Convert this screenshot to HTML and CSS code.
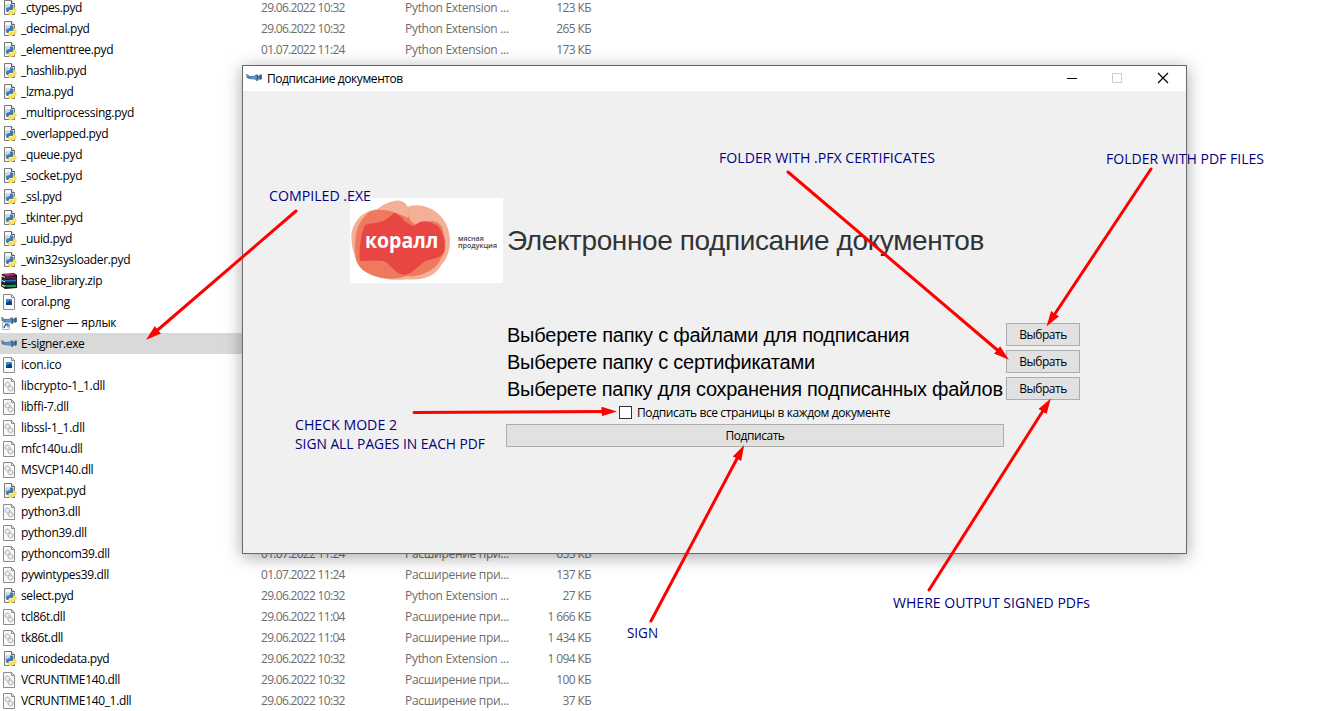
FILE: index.html
```html
<!DOCTYPE html>
<html lang="ru">
<head>
<meta charset="utf-8">
<title>Подписание документов</title>
<link rel="stylesheet" href="styles.css">
</head>
<body>
<svg class="defs" width="0" height="0">
  <symbol id="py" viewBox="0 0 16 16">
    <path d="M3.500 .5h7l3 3v11h-10z" fill="#f4f6f7" stroke="#75797d"/>
    <path d="M10.500 .5v3h3" fill="#fff" stroke="#55595d"/>
    <path d="M4 5q3-2 5 0v5H4z" fill="#ccd5da"/>
    <path d="M9 4.500q3.500-1 3.500 1.500v2.500q0 1.500-2 1.500H9q-1.500 0-1.500 2H6q-1.500-1-.8-3.500Q6 7 9 7z" fill="#3b7cb2"/>
    <path d="M12.500 7.500H14q2 1 1.800 3.500-.5 2-2.800 2h-1q0 2-2 2-3 0-3-2t2-2.200h2q1.500 0 1.500-1.500z" fill="#ffdf50"/>
  </symbol>
  <symbol id="dll" viewBox="0 0 16 16">
    <path d="M2.500 .5h8l3 3v12h-11z" fill="#fafafa" stroke="#8c8c8c"/>
    <path d="M10.500 .5v3h3" fill="none" stroke="#8c8c8c"/>
    <circle cx="6.500" cy="6.500" r="2.500" fill="#e1e6ea" stroke="#9ba4ab" stroke-dasharray="1.300 .5"/>
    <circle cx="9.500" cy="10.500" r="2.500" fill="#e1e6ea" stroke="#8f9ba4" stroke-dasharray="1.300 .5"/>
    <circle cx="6.500" cy="6.500" r=".8" fill="#fff"/><circle cx="9.500" cy="10.500" r=".8" fill="#fff"/>
  </symbol>
  <symbol id="img" viewBox="0 0 16 16">
    <path d="M2.500 .5h8l3 3v12h-11z" fill="#fafafa" stroke="#8c8c8c"/>
    <path d="M10.500 .5v3h3" fill="none" stroke="#8c8c8c"/>
    <path d="M5 5h6v6H5z" fill="#1565b8"/><path d="M5 5h6v2L8 9 5 7z" fill="#2e8be0"/><path d="M7 8l2-1.500L11 9v2H5V9.500z" fill="#0d3c7c"/>
  </symbol>
  <symbol id="zip" viewBox="0 0 16 16">
    <path d="M1 1l12-1 3 2v13l-12 1-4-3z" fill="#181818"/>
    <path d="M2 1.500l10-1 3 1.500-10 1z" fill="#c33483"/><path d="M5 3.500h10v2H5z" fill="#8b1450"/>
    <path d="M2 6l3 1 10-.6v2.800H5z" fill="#1f73bb"/><path d="M5 8h10v1.500H5z" fill="#0f4478"/>
    <path d="M2 11l3 1.300 10-.8V14H5z" fill="#20945a"/>
    <path d="M1 3l3 1.500M1 7.500l3 1.500M1 12l3 1.500" stroke="#e9e6df" stroke-width="1.200"/>
  </symbol>
  <symbol id="plane" viewBox="0 0 16 16">
    <path d="M0 4l2 .5L3.500 6 9 5.800 9.500 4.500h2l.7 1.300 1.300-.3V4.500H16v4.500l-2 .8-1.500-.5-1.500 1.700-2-1.500-5.500-.5L.8 8z" fill="#56789b"/>
    <path d="M3.500 7l7-.5v2.200L4.500 8.500z" fill="#4f9be5"/><path d="M11.500 5v6M14.500 5v4.500" stroke="#374f68" stroke-width=".8"/>
    <path d="M0 4.500l2.500 2" stroke="#90a4b6"/>
  </symbol>
  <symbol id="link" viewBox="0 0 16 16">
    <use href="#plane" y="-2" width="16" height="16"/>
    <path d="M1.500 7.500h7v7h-7z" fill="#fff" stroke="#b6b6b6"/>
    <path d="M3 13q0-2.500 3-3.500M4 9.200h3v3" fill="none" stroke="#1a65b5" stroke-width="1.300"/>
  </symbol>
</svg>

<main class="files">
  <div class="row"><svg class="ico"><use href="#py"/></svg><span class="name">_ctypes.pyd</span><span class="date">29.06.2022 10:32</span><span class="type">Python Extension ...</span><span class="size">123 КБ</span></div>
  <div class="row"><svg class="ico"><use href="#py"/></svg><span class="name">_decimal.pyd</span><span class="date">29.06.2022 10:32</span><span class="type">Python Extension ...</span><span class="size">265 КБ</span></div>
  <div class="row"><svg class="ico"><use href="#py"/></svg><span class="name">_elementtree.pyd</span><span class="date">01.07.2022 11:24</span><span class="type">Python Extension ...</span><span class="size">173 КБ</span></div>
  <div class="row"><svg class="ico"><use href="#py"/></svg><span class="name">_hashlib.pyd</span></div>
  <div class="row"><svg class="ico"><use href="#py"/></svg><span class="name">_lzma.pyd</span></div>
  <div class="row"><svg class="ico"><use href="#py"/></svg><span class="name wide">_multiprocessing.pyd</span></div>
  <div class="row"><svg class="ico"><use href="#py"/></svg><span class="name">_overlapped.pyd</span></div>
  <div class="row"><svg class="ico"><use href="#py"/></svg><span class="name">_queue.pyd</span></div>
  <div class="row"><svg class="ico"><use href="#py"/></svg><span class="name">_socket.pyd</span></div>
  <div class="row"><svg class="ico"><use href="#py"/></svg><span class="name">_ssl.pyd</span></div>
  <div class="row"><svg class="ico"><use href="#py"/></svg><span class="name">_tkinter.pyd</span></div>
  <div class="row"><svg class="ico"><use href="#py"/></svg><span class="name">_uuid.pyd</span></div>
  <div class="row"><svg class="ico"><use href="#py"/></svg><span class="name">_win32sysloader.pyd</span></div>
  <div class="row"><svg class="ico"><use href="#zip"/></svg><span class="name">base_library.zip</span></div>
  <div class="row"><svg class="ico"><use href="#img"/></svg><span class="name">coral.png</span></div>
  <div class="row"><svg class="ico"><use href="#link"/></svg><span class="name wide">E-signer — ярлык</span></div>
  <div class="row selected"><svg class="ico"><use href="#plane"/></svg><span class="name">E-signer.exe</span></div>
  <div class="row"><svg class="ico"><use href="#img"/></svg><span class="name wide">icon.ico</span></div>
  <div class="row"><svg class="ico"><use href="#dll"/></svg><span class="name wide">libcrypto-1_1.dll</span></div>
  <div class="row"><svg class="ico"><use href="#dll"/></svg><span class="name">libffi-7.dll</span></div>
  <div class="row"><svg class="ico"><use href="#dll"/></svg><span class="name wide">libssl-1_1.dll</span></div>
  <div class="row"><svg class="ico"><use href="#dll"/></svg><span class="name">mfc140u.dll</span></div>
  <div class="row"><svg class="ico"><use href="#dll"/></svg><span class="name">MSVCP140.dll</span></div>
  <div class="row"><svg class="ico"><use href="#py"/></svg><span class="name">pyexpat.pyd</span></div>
  <div class="row"><svg class="ico"><use href="#dll"/></svg><span class="name">python3.dll</span></div>
  <div class="row"><svg class="ico"><use href="#dll"/></svg><span class="name">python39.dll</span></div>
  <div class="row"><svg class="ico"><use href="#dll"/></svg><span class="name">pythoncom39.dll</span><span class="date">01.07.2022 11:24</span><span class="type">Расширение при...</span><span class="size">653 КБ</span></div>
  <div class="row"><svg class="ico"><use href="#dll"/></svg><span class="name">pywintypes39.dll</span><span class="date">01.07.2022 11:24</span><span class="type">Расширение при...</span><span class="size">137 КБ</span></div>
  <div class="row"><svg class="ico"><use href="#py"/></svg><span class="name">select.pyd</span><span class="date">29.06.2022 10:32</span><span class="type">Python Extension ...</span><span class="size">27 КБ</span></div>
  <div class="row"><svg class="ico"><use href="#dll"/></svg><span class="name">tcl86t.dll</span><span class="date">29.06.2022 11:04</span><span class="type">Расширение при...</span><span class="size">1 666 КБ</span></div>
  <div class="row"><svg class="ico"><use href="#dll"/></svg><span class="name">tk86t.dll</span><span class="date">29.06.2022 11:04</span><span class="type">Расширение при...</span><span class="size">1 434 КБ</span></div>
  <div class="row"><svg class="ico"><use href="#py"/></svg><span class="name">unicodedata.pyd</span><span class="date">29.06.2022 10:32</span><span class="type">Python Extension ...</span><span class="size">1 094 КБ</span></div>
  <div class="row"><svg class="ico"><use href="#dll"/></svg><span class="name">VCRUNTIME140.dll</span><span class="date">29.06.2022 10:32</span><span class="type">Расширение при...</span><span class="size">100 КБ</span></div>
  <div class="row"><svg class="ico"><use href="#dll"/></svg><span class="name">VCRUNTIME140_1.dll</span><span class="date">29.06.2022 10:32</span><span class="type">Расширение при...</span><span class="size">37 КБ</span></div>
</main>

<section class="window">
  <header class="titlebar">
    <svg class="ico"><use href="#plane"/></svg>
    <span class="title">Подписание документов</span>
    <svg class="controls" width="104" height="12" viewBox="0 0 104 12">
      <path d="M0 6.500h10" stroke="#000"/>
      <path d="M45.500 1.500h9v9h-9z" fill="none" stroke="#ccc"/>
      <path d="M91 1l10 10M101 1L91 11" stroke="#000" stroke-width="1.200"/>
    </svg>
  </header>
  <div class="brand">
    <svg class="logo" width="153" height="85" viewBox="0 0 459 255">
      <path d="M0 0h459v255H0z" fill="#fff"/>
      <g transform="translate(-30 -24)">
        <path d="M34 140C36 95 70 62 110 58 135 42 155 30 180 32 195 35 200 45 202 50 260 32 328 75 330 150 330 190 315 215 304 224 290 256 250 272 200 268 150 274 65 265 45 200 38 180 34 160 34 140z" fill="#f3b096"/>
        <path d="M46 150C48 110 65 85 88 66 120 54 155 60 203 84L206 64C200 80 215 100 232 106 255 90 290 86 305 110 315 140 325 180 302 206 290 240 240 262 200 258 150 275 70 262 50 215 44 190 44 170 46 150z" fill="#ef795e"/>
        <path d="M75 105C100 94 125 108 162 68 185 73 190 100 222 108 250 82 270 98 292 106 314 130 318 165 312 185 295 215 265 200 240 225 210 252 200 258 185 253 160 245 155 225 130 213 100 208 80 215 60 212 55 180 65 125 75 105z" fill="#e74643"/>
      </g>
      <text class="logo-name" x="45" y="151" textLength="220" lengthAdjust="spacingAndGlyphs">коралл</text>
      <text class="logo-sub" x="324" y="130" textLength="77" lengthAdjust="spacingAndGlyphs">мясная</text>
      <text class="logo-sub" x="324" y="151" textLength="117" lengthAdjust="spacingAndGlyphs">продукция</text>
    </svg>
    <h1 class="heading">Электронное подписание документов</h1>
  </div>
  <form class="form">
    <span class="label">Выберете папку с файлами для подписания</span><button type="button" class="btn">Выбрать</button>
    <span class="label">Выберете папку с сертификатами</span><button type="button" class="btn">Выбрать</button>
    <span class="label long">Выберете папку для сохранения подписанных файлов</span><button type="button" class="btn">Выбрать</button>
    <label class="check"><span class="box"></span><span class="check-text">Подписать все страницы в каждом документе</span></label>
    <button type="button" class="btn submit">Подписать</button>
  </form>
</section>

<svg class="notes" width="1319" height="711" viewBox="0 0 1319 711">
  <defs>
    <marker id="head" markerUnits="userSpaceOnUse" markerWidth="18" markerHeight="10" refX="6.500" refY="5" orient="auto"><path d="M0 .2L15.500 5 0 9.800z" fill="#f00"/></marker>
  </defs>
  <g class="arrows">
    <path d="M296 211L153 334"/>
    <path d="M788 172L1002 354"/>
    <path d="M1151 169L1051.500 319"/>
    <path d="M414 412.500L608 411.500"/>
    <path d="M651 621L740 453"/>
    <path d="M929 590L1046 406"/>
  </g>
  <g class="captions">
    <text x="269" y="201" textLength="102" lengthAdjust="spacingAndGlyphs">COMPILED .EXE</text>
    <text x="719" y="163" textLength="216" lengthAdjust="spacingAndGlyphs">FOLDER WITH .PFX CERTIFICATES</text>
    <text x="1106" y="164" textLength="158" lengthAdjust="spacingAndGlyphs">FOLDER WITH PDF FILES</text>
    <text x="295" y="430" textLength="102" lengthAdjust="spacingAndGlyphs">CHECK MODE 2</text>
    <text x="295" y="449" textLength="190" lengthAdjust="spacingAndGlyphs">SIGN ALL PAGES IN EACH PDF</text>
    <text x="627" y="638" textLength="31" lengthAdjust="spacingAndGlyphs">SIGN</text>
    <text x="893" y="608" textLength="197" lengthAdjust="spacingAndGlyphs">WHERE OUTPUT SIGNED PDFs</text>
  </g>
</svg>
</body>
</html>
```
FILE: styles.css
```css
* { box-sizing: border-box; }
body {
  margin: 0;
  height: 711px;
  overflow: hidden;
  position: relative;
  background: #fff;
  font: 12px/21px "Open Sans", "Noto Sans", sans-serif;
  letter-spacing: -0.35px;
  color: #000;
}
.defs { position: absolute; }
.files { margin-top: -3px; }
.row {
  display: grid;
  grid-template-columns: 21px 240px 144px 106px 80px;
  height: 21px;
  align-items: center;
  width: 620px;
  color: #6d6d6d;
  white-space: nowrap;
}
.row .ico { margin-left: 1px; }
.ico { width: 16px; height: 16px; display: block; }
.name { color: #000; }
.wide { letter-spacing: -0.25px; }
.date { letter-spacing: -0.7px; }
.type { letter-spacing: -0.3px; }
.size { text-align: right; letter-spacing: -0.6px; }
.selected { background: #d9d9d9; }

.window {
  position: absolute;
  left: 242px;
  top: 65px;
  width: 945px;
  height: 489px;
  background: #f0f0f0;
  border: 1px solid #6b6b6b;
  box-shadow: 0 3px 16px rgba(0, 0, 0, .35);
}
.titlebar {
  display: flex;
  align-items: center;
  height: 25px;
  padding: 0 15px 1px 3px;
  background: #fff;
}
.title { margin-left: 5px; letter-spacing: -0.42px; }
.controls { margin-left: auto; }
.brand {
  display: flex;
  align-items: center;
  gap: 4px;
  margin: 107px 0 0 107px;
}
.logo { display: block; }
.logo-name { font: bold 63px "Open Sans", sans-serif; fill: #fff; letter-spacing: 0; }
.logo-sub { font: 600 22px "Open Sans", sans-serif; fill: #444; letter-spacing: 0; }
.heading {
  margin: 0;
  font: 28px/34px "Liberation Sans", Arial, sans-serif;
  letter-spacing: -0.4px;
  color: #333;
  white-space: nowrap;
}
.form {
  display: grid;
  grid-template-columns: 498px 74px;
  grid-template-rows: 23px 23px 23px 16px 23px;
  column-gap: 2px;
  row-gap: 4px;
  margin: 40px 0 0 263px;
}
.label {
  padding-left: 1px;
  font: 20px/24px "Liberation Sans", Arial, sans-serif;
  letter-spacing: -0.23px;
  white-space: nowrap;
}
.long { letter-spacing: -0.28px; }
.btn {
  padding: 0;
  border: 1px solid #adadad;
  background: #e1e1e1;
  font: inherit;
  line-height: 21px;
  letter-spacing: -0.45px;
  color: #000;
}
.check {
  grid-column: 1;
  display: flex;
  align-items: center;
  gap: 5px;
  padding-left: 113px;
  white-space: nowrap;
}
.check-text { letter-spacing: -0.38px; }
.box { width: 13px; height: 13px; border: 1px solid #333; background: #fff; }
.submit { grid-column: 1; }

.notes { position: absolute; left: 0; top: 0; }
.arrows path { stroke: #f00; stroke-width: 3; stroke-linecap: round; marker-end: url(#head); fill: none; }
.captions { font: 14px "Open Sans", sans-serif; fill: #000080; letter-spacing: 0; }
```
